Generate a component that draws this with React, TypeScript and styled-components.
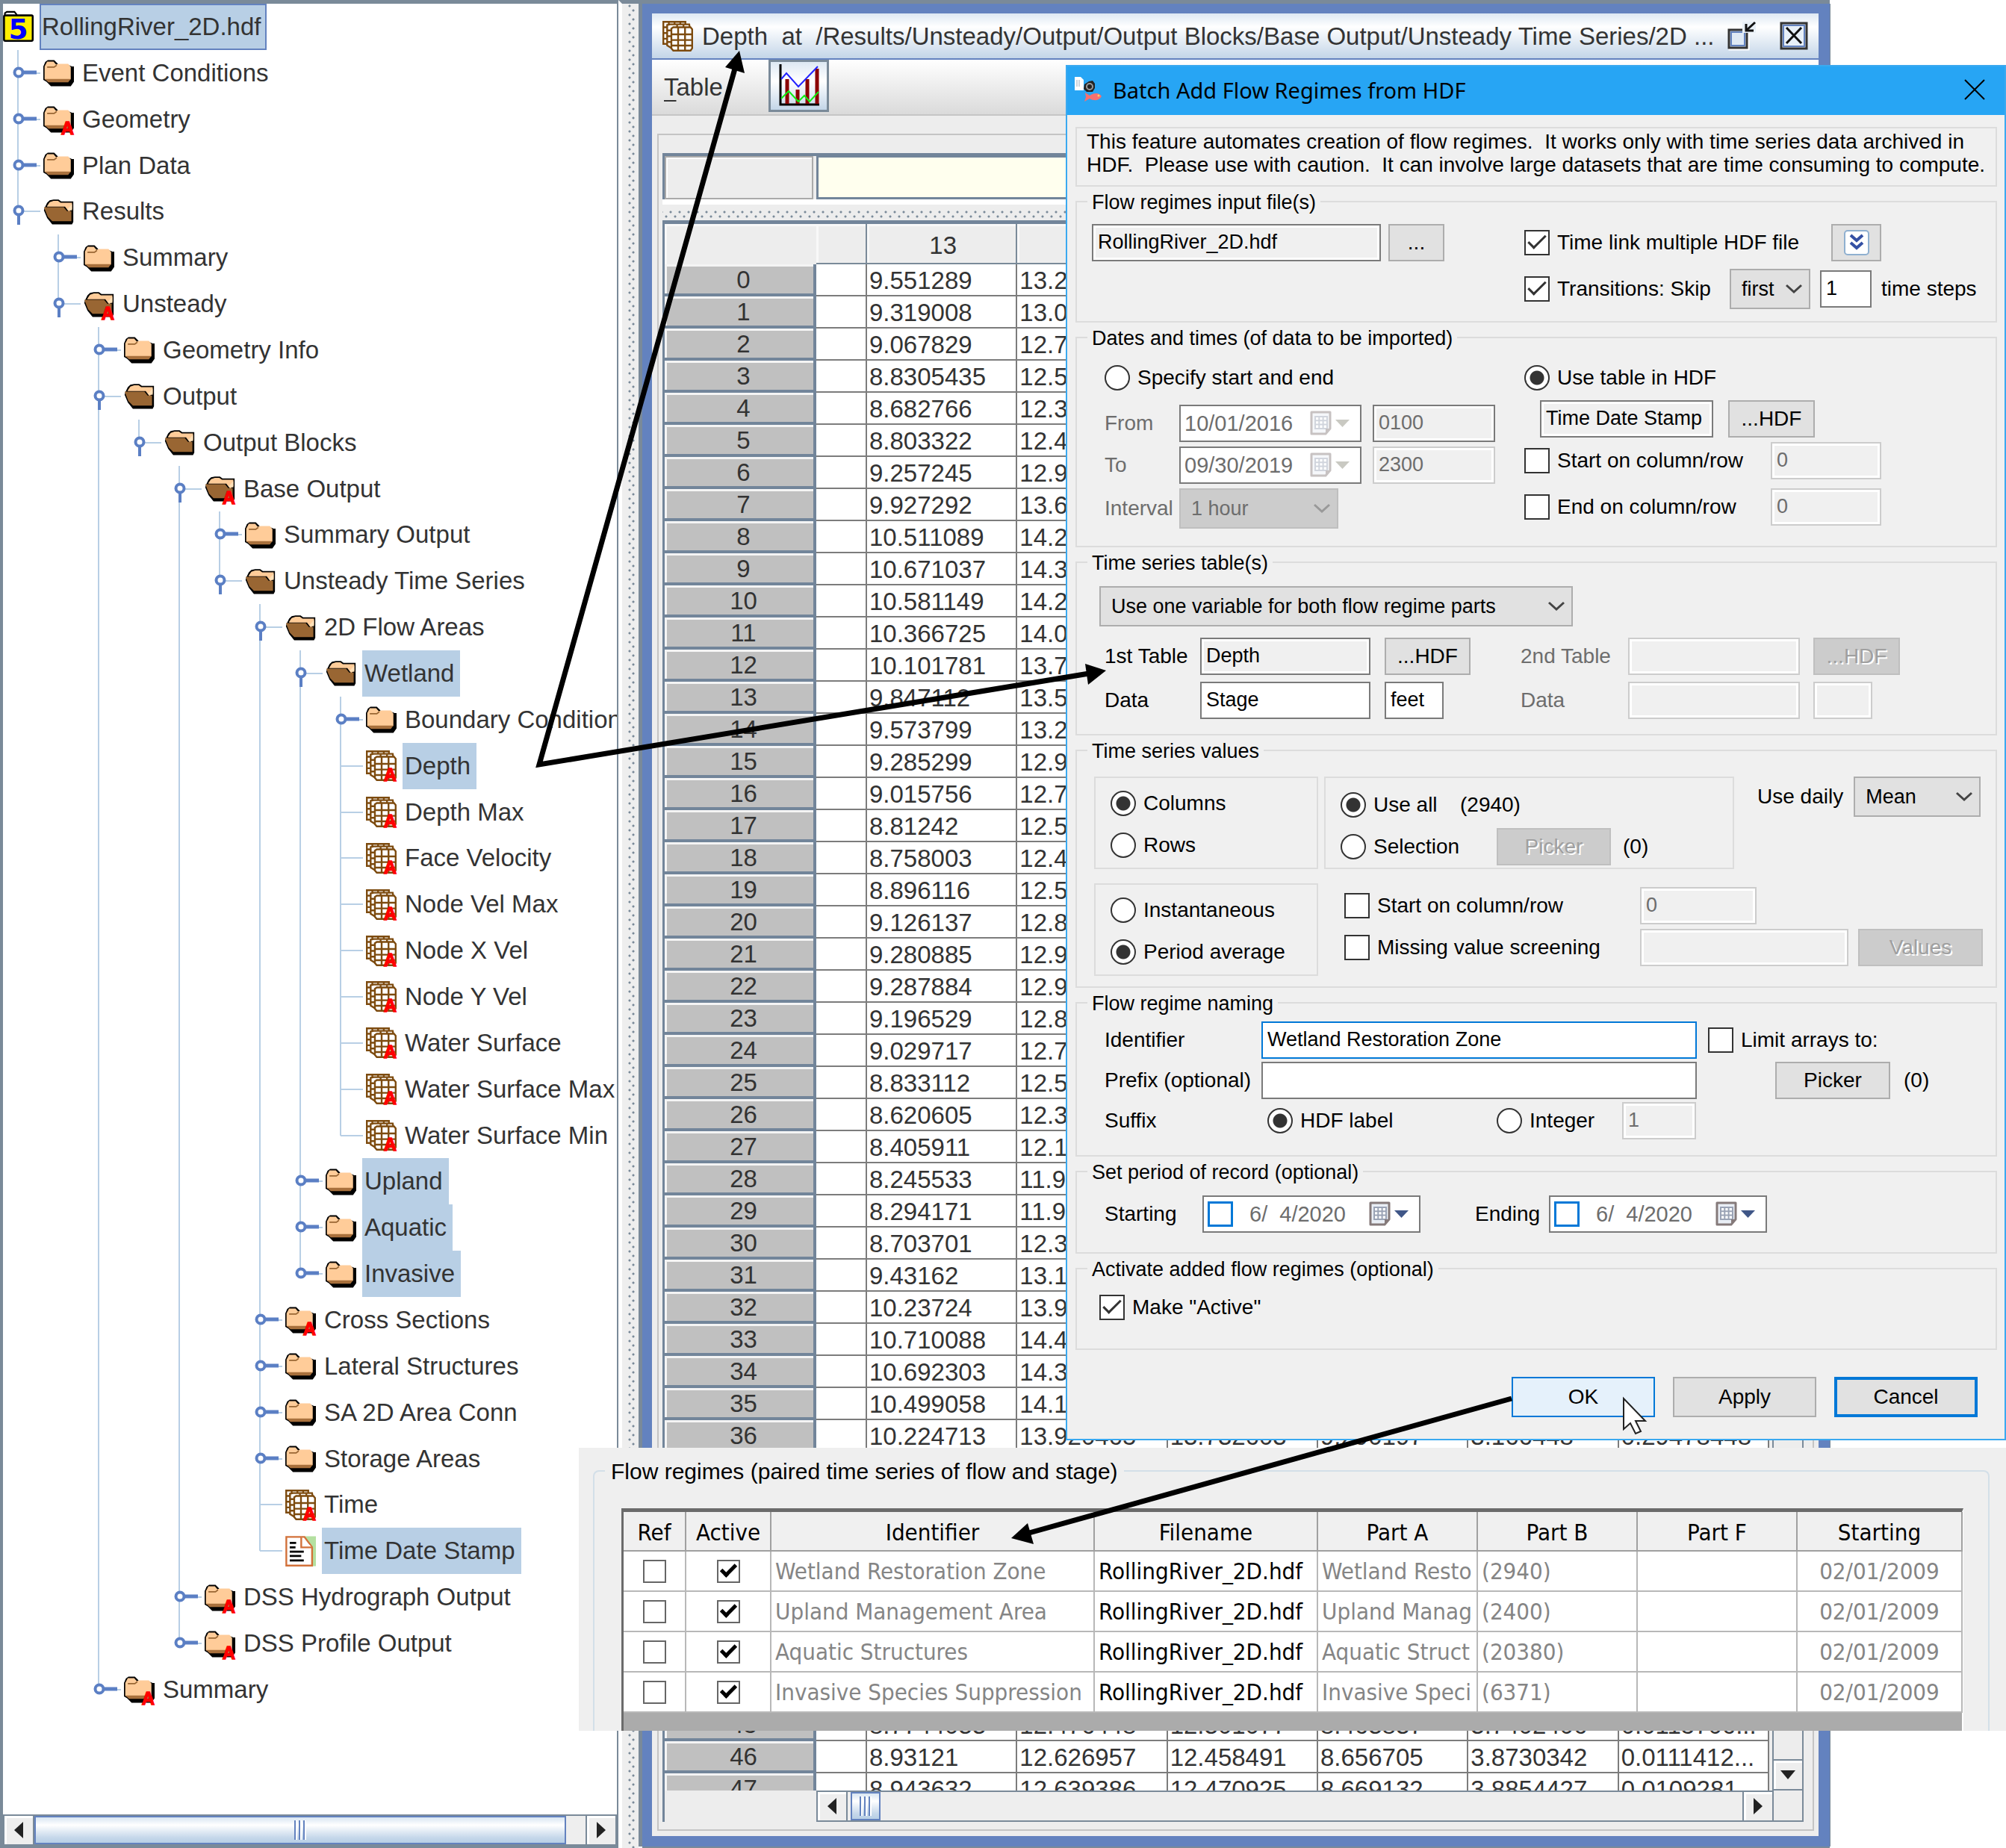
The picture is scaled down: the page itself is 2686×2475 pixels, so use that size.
import React from 'react';
import styled, { createGlobalStyle, css } from 'styled-components';

const sans = '"Liberation Sans", Arial, sans-serif';
const tahoma = '"DejaVu Sans Condensed", "Noto Sans", sans-serif';
const segoe = '"Noto Sans", "Open Sans", sans-serif';

const steel = '#7a8a99';
const blue = '#6382bf';
const select = '#b8cfe5';
const face = '#f0f0f0';

const GlobalStyle = createGlobalStyle`
  *, *::before, *::after { box-sizing: border-box; }
  body { margin: 0; background: #fff; font-family: ${sans}; color: #333; }
  button, input, select { font: inherit; color: inherit; margin: 0; border-radius: 0; }
`;

/* ---------- desktop ---------- */

const Desktop = styled.main`
  position: relative;
  height: 100vh;
  min-height: 2400px;
  display: grid;
  grid-template-columns: 828px 27px minmax(0, 1fr) 235px;
  overflow: hidden;
  font-size: 33px;
`;

const Splitter = styled.div`
  border-top: 5px solid ${steel};
  border-left: 5px solid #fff;
  background:
    radial-gradient(circle at 5px 3px, ${steel} 1px, transparent 2px) 5px 0 / 12px 12px repeat-y,
    radial-gradient(circle at 5px 9px, ${steel} 1px, transparent 2px) 10px 0 / 12px 12px repeat-y,
    #eee;
`;

/* ---------- tree ---------- */

const TreePane = styled.nav`
  display: flex;
  flex-direction: column;
  min-height: 0;
  background: #fff;
  border: solid ${steel};
  border-width: 5px 2px 3px 4px;
`;

const TreeList = styled.ul`
  flex: 1;
  min-height: 0;
  display: flex;
  flex-direction: column;
  margin: 0;
  padding: 0 0 136px;
  list-style: none;
  overflow: hidden;
`;

const TreeRow = styled.li`
  flex: 1;
  display: flex;
  align-items: stretch;
  white-space: pre;
`;

const Guide = styled.span<{ $line: 'none' | 'full' | 'half' }>`
  flex: none;
  position: relative;
  width: 54px;
  &::before {
    content: '';
    display: ${p => (p.$line === 'none' ? 'none' : 'block')};
    position: absolute;
    left: 19px;
    top: 0;
    width: 2px;
    height: ${p => (p.$line === 'half' ? '50%' : '101%')};
    background: ${select};
  }
`;

const GuideMark = styled.svg`
  position: absolute;
  left: 10px;
  top: 50%;
  width: 40px;
  height: 40px;
  margin-top: -20px;
`;

const IconSlot = styled.span`
  flex: none;
  display: flex;
  align-items: center;
  width: 49px;
`;

const NodeLabel = styled.span<{ $on?: boolean; $focus?: boolean }>`
  display: flex;
  align-items: center;
  padding: 0 8px 0 3px;
  ${p => p.$on && css`background: ${select};`}
  ${p => p.$focus && css`box-shadow: inset 0 0 0 2px ${blue};`}
`;

const Glyph = styled.svg`
  flex: none;
  width: 41px;
  height: 41px;
  overflow: visible;
`;

const Badge = () => (
  <text x="24" y="24" textAnchor="end" fontSize="14" fontWeight="700" fontFamily={sans} fill="#f00" stroke="#f00" strokeWidth="0.8">A</text>
);

const Folder = ({ open, badge }: { open?: boolean; badge?: boolean }) => (
  <Glyph viewBox="0 0 24 24" aria-hidden="true">
    {open ? (
      <>
        <path d="M1 9 3 5 5 3 8 2.500h4L14 4h9.500V20l-1 2H7L3 17 0.500 11z" fill="#000" />
        <path d="M3 7.500 5 4.500 8 3.500h3.500L13.500 5H22.500v5L20 12 17 8H3z" fill="#fc9" />
        <path d="M0.500 8.500H16l2.500 3H22v8H7L3.500 16z" fill="#963" />
        <path d="M18.500 10.500 22.500 6v5z" fill="#ffe0b8" />
      </>
    ) : (
      <>
        <path d="M0 7 1.500 3.500 3.500 2H8.500L11 4.500 12 6H20L22.500 7H24V19L21.500 22.500H6L2.500 19 0 17.500z" fill="#000" />
        <path d="M1 7 3 3.200H8L10 5.500 12 5H19.500L21.500 7.500V17L19.500 18.500H3.500L1 17z" fill="#fc9" />
        <path d="M1.200 16.800H21.500L19.500 19.500H4z" fill="#a8703c" />
        <path d="M3 7.500h5.500L10.500 6" fill="none" stroke="#963" strokeWidth="1" />
      </>
    )}
    {badge && <Badge />}
  </Glyph>
);

const GridIcon = ({ badge }: { badge?: boolean }) => (
  <Glyph viewBox="0 0 24 24" aria-hidden="true">
    <g fill="#fff" stroke="#7d4b0f" strokeWidth="1.400">
      <path d="M.7.7H18V18H.7z" />
      <path d="M5 .7V18M9.500.7V18M14 .7V18M.7 5H18M.7 9.500H18M.7 14H18" />
      <path d="M3.700 3.200 6 2.700h15l.5 3v15.500H7l-3.300-2z" />
      <path d="M3.700 7.500H21M3.700 12H21M3.700 16.500H21M11.500 3v17M16.500 3v17" />
      <path d="M7 6 8.500 5H22l1.300 1.500v15l-1.300 1.800H8.500L7 21.500z" />
      <path d="M12.300 5v18.300M17.700 5v18.300M7 10.500h16.300M7 15h16.300M7 19.300h16.300" />
    </g>
    {badge && <Badge />}
  </Glyph>
);

const DocIcon = () => (
  <Glyph viewBox="0 0 24 24" aria-hidden="true">
    <path d="M15 .3h9v23.400h-6z" fill="#b4e0a0" />
    <path d="M.8.800H15l6 8v14.500H.8z" fill="#fff" stroke="#d2713a" strokeWidth="1.400" />
    <path d="M12.500.800V9H21" fill="#fff" stroke="#d2713a" strokeWidth="1.400" />
    <path d="M3.500 5.500h5M3.500 9h4.500M3.500 12.300h11M3.500 15.700h9M3.500 19.200h11" stroke="#000" strokeWidth="1.600" />
  </Glyph>
);

const RootIcon = () => (
  <Glyph viewBox="0 0 24 24" aria-hidden="true">
    <path d="M1.500 4.500V1.500L3 .5h6l2 2.500" fill="#fff" stroke="#000" strokeWidth="1.200" />
    <rect x=".8" y="3.300" width="22.500" height="20" rx="1" fill="#ffee00" stroke="#000" strokeWidth="1.500" />
    <text x="12" y="21.500" textAnchor="middle" fontSize="22" fontWeight="700" fontFamily='"DejaVu Sans", sans-serif' fill="#00f">5</text>
  </Glyph>
);

type Kind = 'root' | 'closed' | 'open' | 'grid' | 'doc';
type Node = { d: number; kind: Kind; text: string; a?: boolean; on?: boolean };

const n = (d: number, kind: Kind, text: string, a = false, on = false): Node => ({ d, kind, text, a, on });

const nodes: Node[] = [
  n(-1, 'root', 'RollingRiver_2D.hdf', false, true),
  n(0, 'closed', 'Event Conditions'),
  n(0, 'closed', 'Geometry', true),
  n(0, 'closed', 'Plan Data'),
  n(0, 'open', 'Results'),
  n(1, 'closed', 'Summary'),
  n(1, 'open', 'Unsteady', true),
  n(2, 'closed', 'Geometry Info'),
  n(2, 'open', 'Output'),
  n(3, 'open', 'Output Blocks'),
  n(4, 'open', 'Base Output', true),
  n(5, 'closed', 'Summary Output'),
  n(5, 'open', 'Unsteady Time Series'),
  n(6, 'open', '2D Flow Areas'),
  n(7, 'open', 'Wetland', false, true),
  n(8, 'closed', 'Boundary Conditions'),
  n(8, 'grid', 'Depth', true, true),
  n(8, 'grid', 'Depth Max', true),
  n(8, 'grid', 'Face Velocity', true),
  n(8, 'grid', 'Node Vel Max', true),
  n(8, 'grid', 'Node X Vel', true),
  n(8, 'grid', 'Node Y Vel', true),
  n(8, 'grid', 'Water Surface', true),
  n(8, 'grid', 'Water Surface Max', true),
  n(8, 'grid', 'Water Surface Min', true),
  n(7, 'closed', 'Upland', false, true),
  n(7, 'closed', 'Aquatic', false, true),
  n(7, 'closed', 'Invasive', false, true),
  n(6, 'closed', 'Cross Sections', true),
  n(6, 'closed', 'Lateral Structures'),
  n(6, 'closed', 'SA 2D Area Conn'),
  n(6, 'closed', 'Storage Areas'),
  n(6, 'grid', 'Time', true),
  n(6, 'doc', 'Time Date Stamp', false, true),
  n(4, 'closed', 'DSS Hydrograph Output', true),
  n(4, 'closed', 'DSS Profile Output', true),
  n(2, 'closed', 'Summary', true),
];

/* A guide line continues below row i when a later sibling exists at that level. */
const continues = (i: number, level: number) => {
  for (let j = i + 1; j < nodes.length; j++) {
    if (nodes[j].d < level) return false;
    if (nodes[j].d === level) return true;
  }
  return false;
};

const NodeIcon = ({ node }: { node: Node }) => {
  if (node.kind === 'root') return <RootIcon />;
  if (node.kind === 'grid') return <GridIcon badge={node.a} />;
  if (node.kind === 'doc') return <DocIcon />;
  return <Folder open={node.kind === 'open'} badge={node.a} />;
};

const Mark = ({ kind }: { kind: Kind }) => (
  <GuideMark viewBox="0 0 40 40" aria-hidden="true">
    <path d="M10 20H40" stroke={select} strokeWidth="2" />
    {kind === 'closed' && <path d="M18 19H35" stroke="#5b7fc4" strokeWidth="5" />}
    {kind === 'open' && <path d="M11 26V38" stroke="#5b7fc4" strokeWidth="4" />}
    {(kind === 'closed' || kind === 'open') && (
      <circle cx="11" cy="19" r="5.500" fill="#fff" stroke="#5b7fc4" strokeWidth="4" />
    )}
  </GuideMark>
);

const Tree = () => (
  <TreeList role="tree">
    {nodes.map((node, i) => (
      <TreeRow key={i} role="treeitem" aria-level={node.d + 2} aria-selected={!!node.on}>
        {Array.from({ length: node.d + 1 }, (_, level) => (
          <Guide key={level} $line={continues(i, level) ? 'full' : level === node.d ? 'half' : 'none'}>
            {level === node.d && <Mark kind={node.kind} />}
          </Guide>
        ))}
        <IconSlot><NodeIcon node={node} /></IconSlot>
        <NodeLabel $on={node.on} $focus={node.kind === 'root'}>{node.text}</NodeLabel>
      </TreeRow>
    ))}
  </TreeList>
);

/* ---------- scroll bars ---------- */

const ScrollTrack = styled.div`
  display: flex;
  height: 42px;
  flex: none;
  background: #eee;
  border: solid ${steel};
  border-width: 2px 0 2px;
`;

const ScrollButton = styled.button`
  flex: none;
  display: flex;
  align-items: center;
  justify-content: center;
  width: 42px;
  padding: 0;
  background: #eee;
  border: 2px solid ${steel};
  border-width: 0 2px;
  box-shadow: inset 3px 3px #fff;
`;

const ScrollThumb = styled.div<{ $w?: number }>`
  ${p => (p.$w ? css`flex: none; width: ${p.$w}px;` : css`flex: 1;`)}
  display: flex;
  align-items: center;
  justify-content: center;
  border: 2px solid ${blue};
  background: linear-gradient(#d8e5f2, #fff 30%, #c5d7ea 80%, #b8cfe5);
  &::before {
    content: '';
    width: 16px;
    height: 26px;
    background: repeating-linear-gradient(90deg, ${blue} 0 2px, #fff 2px 4px, transparent 4px 6px);
  }
`;

const ScrollGap = styled.div<{ $w?: number }>`
  ${p => (p.$w ? css`flex: none; width: ${p.$w}px;` : css`flex: 1;`)}
`;

const Triangle = ({ dir }: { dir: 'left' | 'right' | 'down' }) => (
  <svg width="20" height="24" viewBox="0 0 20 24" aria-hidden="true">
    <path d={dir === 'left' ? 'M16 1V23L4 12z' : dir === 'right' ? 'M4 1V23L16 12z' : 'M0 6H20L10 18z'} fill="#222" />
  </svg>
);

/* ---------- data window ---------- */

const DataWindow = styled.section`
  display: flex;
  flex-direction: column;
  min-height: 0;
  min-width: 0;
  background: #ededed;
  border: solid ${blue};
  border-width: 13px 15px 14px 13px;
  box-shadow: -5px 0 ${steel}, 0 -5px ${steel}, 0 5px ${steel}, -5px -5px ${steel}, 1px 0 ${steel};
  margin: 5px 1px 2px 5px;
`;

const DataTitle = styled.header`
  flex: none;
  display: flex;
  align-items: center;
  height: 62px;
  padding: 0 14px;
  gap: 12px;
  border-bottom: 2px solid ${blue};
  background: linear-gradient(#dde8f3, #fff 30%, #c3d5e8);
  white-space: pre;
`;

const DataTitleText = styled.h1`
  flex: 1;
  min-width: 0;
  margin: 0;
  padding-top: 2px;
  font-size: 33px;
  font-weight: 400;
`;

const GlyphButton = styled.button`
  display: flex;
  padding: 0;
  border: 0;
  background: none;
`;

const TitleButtons = styled.div`
  display: flex;
  align-items: center;
  gap: 32px;
`;

const DataToolbar = styled.div`
  flex: none;
  display: flex;
  align-items: flex-start;
  height: 75px;
  padding-left: 16px;
  gap: 61px;
  border-bottom: 2px solid #c6c6c6;
  background: linear-gradient(#fff, #dadada);
`;

const MenuButton = styled.button`
  height: 74px;
  padding: 0;
  border: 0;
  background: none;
  & > u { text-underline-offset: 6px; text-decoration-thickness: 2px; }
`;

const ChartButton = styled.button`
  width: 81px;
  height: 70px;
  padding: 3px 10px;
  border: 3px solid ${steel};
  background: linear-gradient(#dde8f3, #fff 40%, #c3d5e8);
`;

const DataPanel = styled.div`
  flex: 1;
  min-height: 0;
  display: flex;
  flex-direction: column;
  margin: 24px 6px 7px 7px;
  padding: 24px 12px 10px 5px;
  border: 2px solid #c4c4c4;
`;

const FormulaRow = styled.div`
  flex: none;
  display: grid;
  grid-template-columns: 203px 1fr;
  height: 62px;
  border: solid #72859a;
  border-width: 4px 0 0 3px;
`;

const NameCell = styled.div`
  margin-right: 4px;
  border: 2px solid #aaa;
  box-shadow: inset 2px 2px #fff;
`;

const ValueCell = styled.div`
  background: #ffffee;
  border: solid #72859a;
  border-width: 2px 0 3px 3px;
`;

const DotBar = styled.div`
  flex: none;
  height: 28px;
  border-top: 7px solid #fff;
  background:
    radial-gradient(circle at 3px 5px, ${steel} 1px, transparent 2px) 8px 5px / 12px 12px repeat-x,
    radial-gradient(circle at 9px 5px, ${steel} 1px, transparent 2px) 8px 11px / 12px 12px repeat-x;
`;

const TableFrame = styled.div`
  flex: 1;
  min-height: 0;
  display: grid;
  grid-template-columns: minmax(0, 1fr) 40px;
  grid-template-rows: minmax(0, 1fr) 42px;
  border: solid #72859a;
  border-width: 5px 0 0 3px;
`;

const TableClip = styled.div`
  overflow: hidden;
  padding-right: 4px;
  border-right: 2px solid ${steel};
`;

const DataTable = styled.table`
  width: 100%;
  table-layout: fixed;
  border-collapse: separate;
  border-spacing: 0;
  line-height: 36px;

  th { font-weight: 400; padding: 0; }
  thead th {
    height: 54px;
    padding: 6px 0 0 4px;
    border: solid ${steel};
    border-width: 0 2px 2px 0;
    box-shadow: inset 3px 3px #f8f8f8;
  }
  thead th:first-child { border: 0; }
  tbody th {
    height: 43px;
    padding: 2px 0 0 12px;
    background: #c0c0c0;
    border: solid #72859a;
    border-width: 0 4px 4px 0;
    box-shadow: inset 3px 3px #f4f4f4;
  }
  td {
    height: 43px;
    padding: 2px 0 0 3px;
    background: #fff;
    border: solid #7c7c7c;
    border-width: 0 2px 2px 0;
    white-space: nowrap;
    overflow: hidden;
  }
`;

const VScroll = styled.div`
  display: flex;
  flex-direction: column;
  justify-content: flex-end;
  border-right: 2px solid ${steel};
`;

const DownButton = styled(ScrollButton)`
  width: auto;
  height: 42px;
  border-width: 2px 0;
`;

const HScroll = styled(ScrollTrack)`
  margin-left: 203px;
`;

const Corner = styled.div`
  border: solid ${steel};
  border-width: 0 2px 2px 0;
`;

const firstColumns = `9.551289 13.2|9.319008 13.0|9.067829 12.7|8.8305435 12.5|8.682766 12.3|8.803322 12.4|9.257245 12.9|9.927292 13.6|10.511089 14.2|10.671037 14.3|10.581149 14.2|10.366725 14.0|10.101781 13.7|9.847112 13.5|9.573799 13.2|9.285299 12.9|9.015756 12.7|8.81242 12.5|8.758003 12.4|8.896116 12.5|9.126137 12.8|9.280885 12.9|9.287884 12.9|9.196529 12.8|9.029717 12.7|8.833112 12.5|8.620605 12.3|8.405911 12.1|8.245533 11.9|8.294171 11.9|8.703701 12.3|9.43162 13.1|10.23724 13.9|10.710088 14.4|10.692303 14.3|10.499058 14.1|10.224713 13.920465 13.732603 9.290197 3.166448 0.29478448`
  .split('|')
  .map(r => r.split(' '));

const lastRows: Record<number, string[]> = {
  45: ['8.7744033', '12.476448', '12.301077', '8.463837', '3.7402406', '0.0115706...'],
  46: ['8.93121', '12.626957', '12.458491', '8.656705', '3.8730342', '0.0111412...'],
  47: ['8.943632', '12.639386', '12.470925', '8.669132', '3.8854427', '0.0109281...'],
};

const ChartIcon = () => (
  <svg width="55" height="58" viewBox="0 0 55 58" aria-hidden="true">
    <path d="M3 0V54H55" fill="none" stroke="#000" strokeWidth="3" />
    <path d="M12 20V53M26 34V53M39 20V53M52 6V53" stroke="#8b0000" strokeWidth="5" />
    <path d="M4 20 11 12 27 30 53 3" fill="none" stroke="#22f" strokeWidth="2" />
    <path d="M4 46 14 36 27 50 35 42 42 50 54 37" fill="none" stroke="#1e1" strokeWidth="2" />
  </svg>
);

const DataView = () => (
  <DataWindow>
    <DataTitle>
      <GridIcon />
      <DataTitleText>{'Depth  at  /Results/Unsteady/Output/Output Blocks/Base Output/Unsteady Time Series/2D ...'}</DataTitleText>
      <TitleButtons>
        <GlyphButton aria-label="Restore">
          <svg width="40" height="40" viewBox="0 0 40 40" aria-hidden="true">
            <path d="M5 13H30V38H5z" fill="none" stroke="#fff" strokeWidth="3" />
            <path d="M4 12H28V36H4z" fill="#dfe9f4" stroke="#333" strokeWidth="3" />
            <path d="M7 15H25V33H7z" fill="none" stroke={blue} strokeWidth="2" />
            <path d="M22 1H40V16H22z" fill="#e9f0f7" />
            <path d="M39 2 28 12" stroke="#111" strokeWidth="3" />
            <path d="M27 4V13H37" fill="none" stroke="#111" strokeWidth="3" />
          </svg>
        </GlyphButton>
        <GlyphButton aria-label="Close table">
          <svg width="38" height="38" viewBox="0 0 38 38" aria-hidden="true">
            <path d="M2 2H36V36H2z" fill="#e8f0f8" stroke="#333" strokeWidth="3" />
            <path d="M5 5H33V33H5z" fill="none" stroke={blue} strokeWidth="2" />
            <path d="M9 8 29 29M29 8 9 29" stroke="#111" strokeWidth="3" />
          </svg>
        </GlyphButton>
      </TitleButtons>
    </DataTitle>
    <DataToolbar>
      <MenuButton><u>T</u>able</MenuButton>
      <ChartButton aria-label="Line plot"><ChartIcon /></ChartButton>
    </DataToolbar>
    <DataPanel>
      <FormulaRow>
        <NameCell />
        <ValueCell />
      </FormulaRow>
      <DotBar />
      <TableFrame>
        <TableClip>
          <DataTable>
            <colgroup>
              <col style={{ width: 203 }} />
              <col style={{ width: 68 }} />
              <col span={6} />
            </colgroup>
            <thead>
              <tr>
                <th /><th /><th scope="col">13</th><th /><th /><th /><th /><th />
              </tr>
            </thead>
            <tbody>
              {Array.from({ length: 48 }, (_, r) => {
                const values = firstColumns[r] ?? lastRows[r] ?? [];
                return (
                  <tr key={r}>
                    <th scope="row">{r}</th>
                    <td />
                    {Array.from({ length: 6 }, (_, c) => <td key={c}>{values[c]}</td>)}
                  </tr>
                );
              })}
            </tbody>
          </DataTable>
        </TableClip>
        <VScroll>
          <DownButton aria-label="Scroll down"><Triangle dir="down" /></DownButton>
        </VScroll>
        <HScroll>
          <ScrollButton aria-label="Scroll table left"><Triangle dir="left" /></ScrollButton>
          <ScrollGap $w={4} />
          <ScrollThumb $w={40} />
          <ScrollGap />
          <ScrollButton aria-label="Scroll table right"><Triangle dir="right" /></ScrollButton>
        </HScroll>
        <Corner />
      </TableFrame>
    </DataPanel>
  </DataWindow>
);

/* ---------- dialog ---------- */

const Dialog = styled.section`
  position: absolute;
  left: 1427px;
  right: 0;
  top: 87px;
  display: flex;
  flex-direction: column;
  border: 2px solid #3aa9f0;
  background: ${face};
  color: #000;
  font-size: 28px;
  white-space: pre;
`;

const DialogTitle = styled.header`
  display: flex;
  align-items: center;
  height: 65px;
  padding: 0 26px 3px 9px;
  gap: 14px;
  background: #27a5f4;
`;

const DialogHeading = styled.h2`
  flex: 1;
  margin: 0;
  font: 400 29px ${segoe};
`;

const DialogBody = styled.form`
  display: flex;
  flex-direction: column;
  gap: 10px;
  padding: 16px 10px 29px 11px;
`;

const Note = styled.p`
  margin: 0;
  padding: 2px 13px 12px;
  border: 2px solid #dcdcdc;
  line-height: 31px;
  height: 80px;
`;

const Group = styled.fieldset<{ $top: number; $bottom: number }>`
  min-width: 0;
  margin: 0;
  padding: ${p => p.$top}px 18px ${p => p.$bottom}px 20px;
  border: 2px solid #dcdcdc;
`;

const Legend = styled.legend`
  margin-left: -6px;
  padding: 0 6px;
  font-size: 27px;
  line-height: 22px;
  height: 20px;
`;

const Split = styled.div`
  display: grid;
  grid-template-columns: 579px 1fr;
  align-items: start;
`;

const Col = styled.div<{ $gap?: number; $indent?: number; $top?: number }>`
  display: flex;
  flex-direction: column;
  gap: ${p => p.$gap ?? 6}px;
  padding-left: ${p => p.$indent ?? 0}px;
  padding-top: ${p => p.$top ?? 0}px;
`;

const Row = styled.div<{ $gap?: number; $indent?: number; $h?: number; $lift?: number }>`
  display: flex;
  align-items: center;
  gap: ${p => p.$gap ?? 13}px;
  height: ${p => p.$h ?? 50}px;
  padding-left: ${p => p.$indent ?? 0}px;
  padding-bottom: ${p => p.$lift ?? 0}px;
`;

const Caption = styled.label<{ $w?: number; $dim?: boolean }>`
  flex: none;
  ${p => p.$w && css`width: ${p.$w}px;`}
  color: ${p => (p.$dim ? '#6d6d6d' : '#000')};
`;

const Field = styled.input<{ $w: number; $active?: boolean }>`
  flex: none;
  width: ${p => p.$w}px;
  height: 50px;
  padding: 0 6px 1px;
  border: 2px solid ${p => (p.$active ? '#0078d7' : '#7a7a7a')};
  background: #fff;
  font-size: 27px;
  outline: 0;
  &:read-only { background: ${face}; box-shadow: inset 0 0 0 3px #fff; }
  &:disabled { border-color: #ccc; color: #6d6d6d; }
`;

const DimField = styled(Field)`
  color: #6d6d6d;
`;

const Push = styled.button<{ $w: number; $look?: 'hot' | 'default'; $h?: number }>`
  flex: none;
  width: ${p => p.$w}px;
  height: ${p => p.$h ?? 50}px;
  padding: 0;
  border: 2px solid #adadad;
  background: #e1e1e1;
  display: flex;
  align-items: center;
  justify-content: center;
  &:disabled {
    border-color: #bfbfbf;
    background: #ccc;
    color: #a0a0a0;
    text-shadow: 2px 2px #fff;
  }
  ${p => p.$look === 'hot' && css`border-color: #0078d7; background: #e5f1fb;`}
  ${p => p.$look === 'default' && css`border: 4px solid #0078d7;`}
`;

const Choice = styled.label<{ $w?: number }>`
  flex: none;
  display: flex;
  align-items: center;
  gap: 10px;
  ${p => p.$w && css`width: ${p.$w}px;`}
`;

const Tick = styled.input.attrs({ type: 'checkbox' })<{ $blue?: boolean }>`
  appearance: none;
  flex: none;
  display: grid;
  place-items: center;
  width: 34px;
  height: 34px;
  border: ${p => (p.$blue ? '3px solid #0078d7' : '2px solid #333')};
  background: #fff;
  &:checked::after {
    content: '';
    width: 24px;
    height: 12px;
    margin-top: -8px;
    border: solid #333;
    border-width: 0 0 3px 3px;
    transform: rotate(-45deg);
  }
`;

const Dot = styled.input.attrs({ type: 'radio' })`
  appearance: none;
  flex: none;
  width: 34px;
  height: 34px;
  border: 2px solid #333;
  border-radius: 50%;
  background: #fff;
  &:checked { background: radial-gradient(circle, #333 9px, #fff 10px); }
`;

const DropWrap = styled.span<{ $w: number }>`
  flex: none;
  display: grid;
  align-items: center;
  width: ${p => p.$w}px;
  height: 54px;
  & > * { grid-area: 1 / 1; }
  & > svg { justify-self: end; margin-right: 10px; pointer-events: none; }
`;

const DropSelect = styled.select`
  appearance: none;
  width: 100%;
  height: 100%;
  padding: 0 0 0 14px;
  border: 2px solid #adadad;
  background: #e1e1e1;
  font-size: 27px;
  &:disabled { border-color: #bfbfbf; background: #ccc; color: #6d6d6d; opacity: 1; }
`;

const Drop = ({ w, value, label, id, disabled }: { w: number; value: string; label?: string; id?: string; disabled?: boolean }) => (
  <DropWrap $w={w}>
    <DropSelect id={id} aria-label={label} disabled={disabled} defaultValue={value}>
      <option>{value}</option>
    </DropSelect>
    <svg width="24" height="14" viewBox="0 0 24 14" aria-hidden="true">
      <path d="M2 2 12 11 22 2" fill="none" stroke={disabled ? '#999' : '#444'} strokeWidth="3" />
    </svg>
  </DropWrap>
);

const DateBox = styled.span<{ $w: number }>`
  flex: none;
  display: flex;
  align-items: center;
  width: ${p => p.$w}px;
  height: 50px;
  padding: 0 13px 0 5px;
  border: 2px solid #7a7a7a;
  background: #fff;
`;

const DateText = styled.input<{ $indent?: number }>`
  flex: 1;
  min-width: 0;
  padding: 0 0 0 ${p => p.$indent ?? 0}px;
  border: 0;
  background: none;
  color: #6d6d6d;
  font-size: 29px;
  outline: 0;
`;

const CalendarButton = ({ dim, label }: { dim?: boolean; label: string }) => (
  <GlyphButton type="button" aria-label={label} disabled={dim}>
    <svg width="54" height="34" viewBox="0 0 54 34" aria-hidden="true" opacity={dim ? 0.45 : 1}>
      <path d="M2 2H27V24L21 31H2z" fill="#e9eef5" stroke="#857a7a" strokeWidth="3" strokeLinejoin="round" />
      <path d="M7 8H23V24H7zM12.300 8V24M17.600 8V24M7 13.300H23M7 18.600H23" fill="#fff" stroke="#9aa3b5" strokeWidth="2" />
      <path d="M27 24H21V31z" fill="#857a7a" />
      <path d="M34 12H53L43.500 22z" fill={dim ? '#8a8a7a' : '#3f5687'} />
    </svg>
  </GlyphButton>
);

const TableGrid = styled.div`
  display: grid;
  grid-template-columns: 128px 247px 182px 144px 248px 116px;
  align-items: center;
  row-gap: 9px;
  padding: 16px 0 0 17px;
`;

const ValuesGrid = styled.div`
  display: grid;
  grid-template-columns: 300px 549px 1fr;
  gap: 19px 8px;
  padding-left: 3px;
`;

const SubBox = styled.div<{ $drop?: boolean }>`
  display: flex;
  flex-direction: column;
  gap: 6px;
  padding: ${p => (p.$drop ? '11px 0 3px 20px' : '9px 0 5px 20px')};
  border: 2px solid #dcdcdc;
`;

const WideCell = styled.div`
  grid-column: span 2;
`;

const NamingGrid = styled.div`
  display: grid;
  grid-template-columns: 210px 598px 1fr;
  align-items: center;
  row-gap: 4px;
  padding-left: 17px;
`;

const Footer = styled.footer`
  display: flex;
  justify-content: flex-end;
  gap: 24px;
  padding: 26px 26px 0 0;
`;

const DialogIcon = () => (
  <svg width="38" height="36" viewBox="0 0 38 36" aria-hidden="true">
    <path d="M1 1H9L13 5V19H1z" fill="#fff" />
    <path d="M4 5V14M7 5V14" stroke="#9ab" strokeWidth="1" />
    <path d="M14 11 20 7 25 6 28 10V16L25 21H17L13 17z" fill="#222" />
    <circle cx="21" cy="14" r="4" fill="none" stroke="#999" strokeWidth="2" />
    <path d="M15 22 21 26C27 22 34 22 37 27C33 34 26 33 21 30L14 34 16 28z" fill="#f87070" />
    <circle cx="33" cy="26" r="1.500" fill="#fc6" />
  </svg>
);

const BatchDialog = () => (
  <Dialog role="dialog" aria-labelledby="batch-title">
    <DialogTitle>
      <DialogIcon />
      <DialogHeading id="batch-title">Batch Add Flow Regimes from HDF</DialogHeading>
      <GlyphButton aria-label="Close dialog">
        <svg width="28" height="28" viewBox="0 0 28 28" aria-hidden="true">
          <path d="M1 1 27 27M27 1 1 27" stroke="#000" strokeWidth="2" />
        </svg>
      </GlyphButton>
    </DialogTitle>
    <DialogBody onSubmit={e => e.preventDefault()}>
      <Note>{'This feature automates creation of flow regimes.  It works only with time series data archived in\nHDF.  Please use with caution.  It can involve large datasets that are time consuming to compute.'}</Note>

      <Group $top={20} $bottom={18}>
        <Legend>Flow regimes input file(s)</Legend>
        <Split>
          <Row $gap={10}>
            <Field $w={387} aria-label="Input file" readOnly defaultValue="RollingRiver_2D.hdf" />
            <Push type="button" $w={75}>...</Push>
          </Row>
          <Col $gap={12}>
            <Row>
              <Choice $w={398}><Tick defaultChecked />Time link multiple HDF file</Choice>
              <Push type="button" $w={67} aria-label="Expand">
                <svg width="34" height="34" viewBox="0 0 34 34" aria-hidden="true">
                  <rect x="1" y="1" width="32" height="32" rx="4" fill="#fff" stroke="#8fb0d0" strokeWidth="2" />
                  <path d="M9 7 17 14 25 7M9 17 17 24 25 17" fill="none" stroke="#3450a4" strokeWidth="4" />
                </svg>
              </Push>
            </Row>
            <Row>
              <Choice $w={262}><Tick defaultChecked />Transitions: Skip</Choice>
              <Drop w={108} value="first" label="Skip position" />
              <Field $w={69} id="steps" defaultValue="1" />
              <Caption htmlFor="steps">time steps</Caption>
            </Row>
          </Col>
        </Split>
      </Group>

      <Group $top={20} $bottom={21}>
        <Legend>Dates and times (of data to be imported)</Legend>
        <Split>
          <Col $indent={17}>
            <Row $h={54} $lift={6}>
              <Choice><Dot name="dates" />Specify start and end</Choice>
            </Row>
            <Row $gap={15}>
              <Caption $w={85} $dim htmlFor="from">From</Caption>
              <DateBox $w={244}>
                <DateText id="from" disabled defaultValue="10/01/2016" />
                <CalendarButton dim label="Pick from date" />
              </DateBox>
              <DimField $w={164} readOnly aria-label="From time" defaultValue="0100" />
            </Row>
            <Row $gap={15}>
              <Caption $w={85} $dim htmlFor="to">To</Caption>
              <DateBox $w={244}>
                <DateText id="to" disabled defaultValue="09/30/2019" />
                <CalendarButton dim label="Pick to date" />
              </DateBox>
              <Field $w={164} disabled aria-label="To time" defaultValue="2300" />
            </Row>
            <Row $gap={15} $h={54}>
              <Caption $w={85} $dim htmlFor="interval">Interval</Caption>
              <Drop id="interval" w={213} value="1 hour" disabled />
            </Row>
          </Col>
          <Col>
            <Row $h={48}>
              <Choice><Dot name="dates" defaultChecked />Use table in HDF</Choice>
            </Row>
            <Row $gap={20} $indent={21}>
              <Field $w={232} readOnly aria-label="Date table" defaultValue="Time Date Stamp" />
              <Push type="button" $w={116}>...HDF</Push>
            </Row>
            <Row $gap={20}>
              <Choice $w={310}><Tick />Start on column/row</Choice>
              <Field $w={148} disabled aria-label="Date start column" defaultValue="0" />
            </Row>
            <Row $gap={20} $h={62}>
              <Choice $w={310}><Tick />End on column/row</Choice>
              <Field $w={148} disabled aria-label="Date end column" defaultValue="0" />
            </Row>
          </Col>
        </Split>
      </Group>

      <Group $top={22} $bottom={20}>
        <Legend>Time series table(s)</Legend>
        <Row $indent={10} $h={53}>
          <Drop w={634} value="Use one variable for both flow regime parts" label="Variable use" />
        </Row>
        <TableGrid>
          <Caption htmlFor="table1">1st Table</Caption>
          <Field $w={228} id="table1" readOnly defaultValue="Depth" />
          <Push type="button" $w={115}>...HDF</Push>
          <Caption $dim htmlFor="table2">2nd Table</Caption>
          <Field $w={230} id="table2" disabled />
          <Push type="button" $w={116} disabled>...HDF</Push>
          <Caption htmlFor="data1">Data</Caption>
          <Field $w={228} id="data1" defaultValue="Stage" />
          <Field $w={79} aria-label="Units" defaultValue="feet" />
          <Caption $dim htmlFor="data2">Data</Caption>
          <Field $w={230} id="data2" disabled />
          <Field $w={79} aria-label="Second units" disabled />
        </TableGrid>
      </Group>

      <Group $top={25} $bottom={14}>
        <Legend>Time series values</Legend>
        <ValuesGrid>
          <SubBox>
            <Row><Choice><Dot name="axis" defaultChecked />Columns</Choice></Row>
            <Row><Choice><Dot name="axis" />Rows</Choice></Row>
          </SubBox>
          <SubBox $drop>
            <Row $gap={16}>
              <Choice $w={144}><Dot name="scope" defaultChecked />Use all</Choice>
              <span>(2940)</span>
            </Row>
            <Row $gap={16}>
              <Choice $w={193}><Dot name="scope" />Selection</Choice>
              <Push type="button" $w={153} disabled>Picker</Push>
              <span>(0)</span>
            </Row>
          </SubBox>
          <Row $indent={23} $gap={14} $h={54}>
            <Caption htmlFor="daily">Use daily</Caption>
            <Drop id="daily" w={170} value="Mean" />
          </Row>
          <SubBox>
            <Row><Choice><Dot name="period" />Instantaneous</Choice></Row>
            <Row><Choice><Dot name="period" defaultChecked />Period average</Choice></Row>
          </SubBox>
          <WideCell>
            <Col $indent={27} $top={5}>
              <Row>
                <Choice $w={383}><Tick />Start on column/row</Choice>
                <Field $w={156} disabled aria-label="Value start column" defaultValue="0" />
              </Row>
              <Row>
                <Choice $w={383}><Tick />Missing value screening</Choice>
                <Field $w={279} disabled aria-label="Missing values" />
                <Push type="button" $w={167} disabled>Values</Push>
              </Row>
            </Col>
          </WideCell>
        </ValuesGrid>
      </Group>

      <Group $top={15} $bottom={21}>
        <Legend>Flow regime naming</Legend>
        <NamingGrid>
          <Caption htmlFor="identifier">Identifier</Caption>
          <Field $w={583} $active id="identifier" defaultValue="Wetland Restoration Zone" />
          <Choice><Tick />Limit arrays to:</Choice>
          <Caption htmlFor="prefix">Prefix (optional)</Caption>
          <Field $w={583} id="prefix" />
          <Row $indent={90} $gap={18}>
            <Push type="button" $w={154}>Picker</Push>
            <span>(0)</span>
          </Row>
          <span>Suffix</span>
          <Row $indent={8} $gap={0}>
            <Choice $w={307}><Dot name="suffix" defaultChecked />HDF label</Choice>
            <Choice $w={168}><Dot name="suffix" />Integer</Choice>
            <Field $w={99} disabled aria-label="Suffix number" defaultValue="1" />
          </Row>
        </NamingGrid>
      </Group>

      <Group $top={22} $bottom={26}>
        <Legend>Set period of record (optional)</Legend>
        <Row $indent={17} $gap={0}>
          <Caption $w={131} htmlFor="starting">Starting</Caption>
          <DateBox $w={292}>
            <Tick $blue aria-label="Set starting date" />
            <DateText id="starting" $indent={22} defaultValue="6/  4/2020" />
            <CalendarButton label="Pick starting date" />
          </DateBox>
          <ScrollGap $w={73} />
          <Caption $w={99} htmlFor="ending">Ending</Caption>
          <DateBox $w={292}>
            <Tick $blue aria-label="Set ending date" />
            <DateText id="ending" $indent={22} defaultValue="6/  4/2020" />
            <CalendarButton label="Pick ending date" />
          </DateBox>
        </Row>
      </Group>

      <Group $top={17} $bottom={30}>
        <Legend>Activate added flow regimes (optional)</Legend>
        <Row $indent={10}>
          <Choice><Tick defaultChecked />Make "Active"</Choice>
        </Row>
      </Group>

      <Footer>
        <Push type="submit" $w={192} $h={54} $look="hot">OK</Push>
        <Push type="button" $w={192} $h={54}>Apply</Push>
        <Push type="button" $w={192} $h={54} $look="default">Cancel</Push>
      </Footer>
    </DialogBody>
  </Dialog>
);

/* ---------- regime list ---------- */

const RegimePanel = styled.section`
  position: absolute;
  left: 775px;
  right: 0;
  top: 1939px;
  padding: 21px 22px 0 19px;
  background: #efefef;
  color: #000;
`;

const RegimeGroup = styled.fieldset`
  min-width: 0;
  margin: 0;
  padding: 40px 33px 0 36px;
  border: 2px solid #d3dfe8;
  border-bottom: 0;
  border-radius: 8px 8px 0 0;
`;

const RegimeLegend = styled.legend`
  margin-left: -22px;
  padding: 0 8px;
  font-size: 30px;
  line-height: 22px;
  height: 20px;
`;

const RegimeFrame = styled.div`
  border: solid #6b6b6b;
  border-width: 5px 0 0 3px;
  border-right: 2px solid #fff;
  padding-bottom: 24px;
  background: #ababab;
`;

const RegimeTable = styled.table`
  width: 100%;
  table-layout: fixed;
  border-collapse: separate;
  border-spacing: 0;
  font: 31px/36px ${tahoma};

  th {
    height: 53px;
    padding: 3px 0 0;
    font-weight: 400;
    background: ${face};
    border: solid #a0a0a0;
    border-width: 0 2px 2px 0;
  }
  td {
    height: 54px;
    padding: 0;
    background: #fff;
    border: solid #b8b8b8;
    border-width: 0 2px 2px 0;
  }
`;

const Cell = styled.span<{ $center?: boolean; $strong?: boolean }>`
  display: block;
  overflow: hidden;
  white-space: nowrap;
  margin: 0 5px;
  text-align: ${p => (p.$center ? 'center' : 'left')};
  color: ${p => (p.$strong ? '#000' : '#858585')};
`;

const GridTick = styled(Tick)`
  width: 31px;
  height: 31px;
  margin: 0 auto;
  border-color: #666;
  &:checked::after {
    width: 21px;
    height: 12px;
    margin-top: -7px;
    border-color: #000;
    border-width: 0 0 5px 5px;
  }
`;

const columns: [string, number][] = [
  ['Ref', 84], ['Active', 114], ['Identifier', 433], ['Filename', 299],
  ['Part A', 214], ['Part B', 214], ['Part F', 214], ['Starting', 221],
];

const regimes = [
  ['Wetland Restoration Zone', 'Wetland Resto', '(2940)'],
  ['Upland Management Area', 'Upland Manage', '(2400)'],
  ['Aquatic Structures', 'Aquatic Struct', '(20380)'],
  ['Invasive Species Suppression', 'Invasive Speci', '(6371)'],
];

const Regimes = () => (
  <RegimePanel>
    <RegimeGroup>
      <RegimeLegend>Flow regimes (paired time series of flow and stage)</RegimeLegend>
      <RegimeFrame>
        <RegimeTable>
          <colgroup>{columns.map(([name, w]) => <col key={name} style={{ width: w }} />)}</colgroup>
          <thead>
            <tr>{columns.map(([name]) => <th key={name} scope="col">{name}</th>)}</tr>
          </thead>
          <tbody>
            {regimes.map(([name, partA, partB]) => (
              <tr key={name}>
                <td><GridTick aria-label={`Reference ${name}`} /></td>
                <td><GridTick defaultChecked aria-label={`Activate ${name}`} /></td>
                <td><Cell>{name}</Cell></td>
                <td><Cell $strong>RollingRiver_2D.hdf</Cell></td>
                <td><Cell>{partA}</Cell></td>
                <td><Cell>{partB}</Cell></td>
                <td />
                <td><Cell $center>02/01/2009</Cell></td>
              </tr>
            ))}
          </tbody>
        </RegimeTable>
      </RegimeFrame>
    </RegimeGroup>
  </RegimePanel>
);

/* ---------- call-out arrows and pointer ---------- */

const Overlay = styled.svg`
  position: absolute;
  left: 0;
  top: 0;
  pointer-events: none;
`;

const Arrows = () => (
  <Overlay width="2686" height="2475" viewBox="0 0 2686 2475" aria-hidden="true">
    <g fill="none" stroke="#000" strokeWidth="7">
      <path d="M984 92 722 1024 1458 902" />
      <path d="M2024 1873 1378 2053" />
    </g>
    <path d="M990 68 971 90 997 98z" />
    <path d="M1481 898 1453 889 1457 917z" />
    <path d="M1354 2060 1376 2040 1384 2068z" />
    <path d="M2174 1873V1914L2183 1906 2190 1920 2197 1917 2190 1903H2203z" fill="#fff" stroke="#222" strokeWidth="2" />
  </Overlay>
);

export default function App() {
  return (
    <>
      <GlobalStyle />
      <Desktop>
        <TreePane aria-label="File contents">
          <Tree />
          <ScrollTrack>
            <ScrollButton aria-label="Scroll tree left"><Triangle dir="left" /></ScrollButton>
            <ScrollThumb />
            <ScrollGap $w={26} />
            <ScrollButton aria-label="Scroll tree right"><Triangle dir="right" /></ScrollButton>
          </ScrollTrack>
        </TreePane>
        <Splitter />
        <DataView />
        <BatchDialog />
        <Regimes />
        <Arrows />
      </Desktop>
    </>
  );
}
